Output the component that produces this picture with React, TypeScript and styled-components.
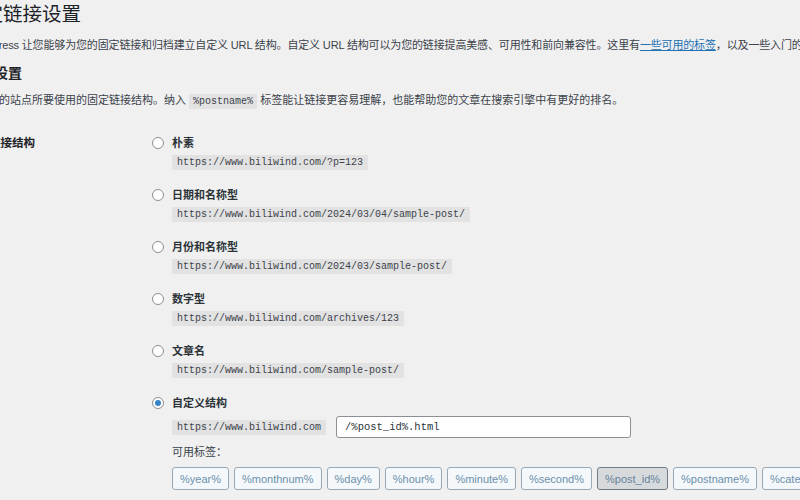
import React from "react";
import styled, { createGlobalStyle } from "styled-components";

const Global = createGlobalStyle`
  html, body { margin: 0; padding: 0; }
  body {
    background: #f0f0f1;
    overflow: hidden;
    width: 800px;
    height: 500px;
    font-family: "Liberation Sans", "Noto Sans CJK SC", sans-serif;
    color: #3c434a;
  }
`;

const Wrap = styled.div`
  margin-left: -34px;
  width: 1000px;
`;

const Title = styled.h1`
  margin: 1px 0 0 -2px;
  font-size: 19.5px;
  line-height: 26px;
  font-weight: 400;
  color: #1d2327;
`;

const Para = styled.p<{ $top: number; $tight?: boolean }>`
  margin: ${(p) => p.$top}px 0 0;
  font-size: 11px;
  line-height: 18px;
  white-space: nowrap;
  letter-spacing: ${(p) => (p.$tight ? "-0.15px" : "0")};
  color: #3c434a;
`;

const Link = styled.a`
  color: #2271b1;
  text-decoration: underline;
`;

const Heading = styled.h2`
  margin: 9px 0 0;
  font-size: 14px;
  line-height: 20px;
  font-weight: 700;
  color: #1d2327;
`;

const InlineCode = styled.code`
  font-family: "Liberation Mono", monospace;
  font-size: 10px;
  background: #e2e2e3;
  padding: 2px 4px;
  color: #3c434a;
`;

const Table = styled.div`
  display: grid;
  grid-template-columns: 186px 1fr;
  margin-top: 24px;
`;

const RowLabel = styled.div`
  font-size: 11.5px;
  line-height: 16px;
  font-weight: 700;
  color: #1d2327;
`;

const Options = styled.div`
  display: flex;
  flex-direction: column;
  gap: 17px;
`;

const Option = styled.div`
  display: grid;
  grid-template-columns: 12px 1fr;
  column-gap: 8px;
`;

const Radio = styled.span<{ $checked?: boolean }>`
  width: 12px;
  height: 12px;
  box-sizing: border-box;
  border: 1px solid #8c8f94;
  border-radius: 50%;
  background: #fff;
  margin-top: 2px;
  display: flex;
  align-items: center;
  justify-content: center;
  &::after {
    content: "";
    width: 6px;
    height: 6px;
    border-radius: 50%;
    background: ${(p) => (p.$checked ? "#3582c4" : "transparent")};
  }
`;

const OptionBody = styled.div`
  display: flex;
  flex-direction: column;
  align-items: flex-start;
`;

const OptionLabel = styled.label`
  font-size: 11px;
  line-height: 16px;
  font-weight: 700;
  color: #2c3338;
`;

const Code = styled.code`
  display: inline-block;
  margin-top: 4px;
  font-family: "Liberation Mono", monospace;
  font-size: 10px;
  line-height: 15px;
  padding: 0 5px;
  background: #e2e2e3;
  color: #3c434a;
`;

const CustomRow = styled.div`
  display: flex;
  align-items: center;
  gap: 10px;
  margin-top: 5px;
  & > code { margin-top: 0; }
`;

const Input = styled.div`
  width: 295px;
  height: 22px;
  box-sizing: border-box;
  border: 1px solid #8c8f94;
  border-radius: 3px;
  background: #fff;
  padding: 0 8px;
  display: flex;
  align-items: center;
  font-family: "Liberation Mono", monospace;
  font-size: 10.5px;
  color: #2c3338;
`;

const TagsLabel = styled.div`
  margin-top: 6px;
  font-size: 11px;
  line-height: 16px;
  color: #3c434a;
`;

const Tags = styled.div`
  display: flex;
  gap: 5px;
  margin-top: 7px;
  white-space: nowrap;
`;

const Tag = styled.button<{ $active?: boolean }>`
  height: 23px;
  padding: 0 7px;
  box-sizing: border-box;
  border: 1px solid ${(p) => (p.$active ? "#6f7c88" : "#98a8b5")};
  border-radius: 3px;
  background: ${(p) => (p.$active ? "#d7dadd" : "#f4f8fa")};
  color: ${(p) => (p.$active ? "#67839a" : "#6c90ac")};
  font-family: "Liberation Sans", sans-serif;
  font-size: 11px;
  flex-shrink: 0;
`;

const options = [
  { label: "朴素", url: "https://www.biliwind.com/?p=123" },
  { label: "日期和名称型", url: "https://www.biliwind.com/2024/03/04/sample-post/" },
  { label: "月份和名称型", url: "https://www.biliwind.com/2024/03/sample-post/" },
  { label: "数字型", url: "https://www.biliwind.com/archives/123" },
  { label: "文章名", url: "https://www.biliwind.com/sample-post/" },
];

const tags = [
  "%year%",
  "%monthnum%",
  "%day%",
  "%hour%",
  "%minute%",
  "%second%",
  "%post_id%",
  "%postname%",
  "%category%",
  "%author%",
];

export default function App() {
  return (
    <>
      <Global />
      <Wrap>
        <Title>固定链接设置</Title>
        <Para $top={9} $tight>
          WordPress 让您能够为您的固定链接和归档建立自定义 URL 结构。自定义 URL
          结构可以为您的链接提高美感、可用性和前向兼容性。这里有
          <Link>一些可用的标签</Link>，以及一些入门的示例。
        </Para>
        <Heading>常用设置</Heading>
        <Para $top={8}>
          选择您的站点所要使用的固定链接结构。纳入 <InlineCode>%postname%</InlineCode>{" "}
          标签能让链接更容易理解，也能帮助您的文章在搜索引擎中有更好的排名。
        </Para>
        <Table>
          <RowLabel>固定链接结构</RowLabel>
          <Options>
            {options.map((o) => (
              <Option key={o.label}>
                <Radio />
                <OptionBody>
                  <OptionLabel>{o.label}</OptionLabel>
                  <Code>{o.url}</Code>
                </OptionBody>
              </Option>
            ))}
            <Option>
              <Radio $checked />
              <OptionBody>
                <OptionLabel>自定义结构</OptionLabel>
                <CustomRow>
                  <Code>https://www.biliwind.com</Code>
                  <Input>/%post_id%.html</Input>
                </CustomRow>
                <TagsLabel>可用标签：</TagsLabel>
                <Tags>
                  {tags.map((t) => (
                    <Tag key={t} $active={t === "%post_id%"}>
                      {t}
                    </Tag>
                  ))}
                </Tags>
              </OptionBody>
            </Option>
          </Options>
        </Table>
      </Wrap>
    </>
  );
}
